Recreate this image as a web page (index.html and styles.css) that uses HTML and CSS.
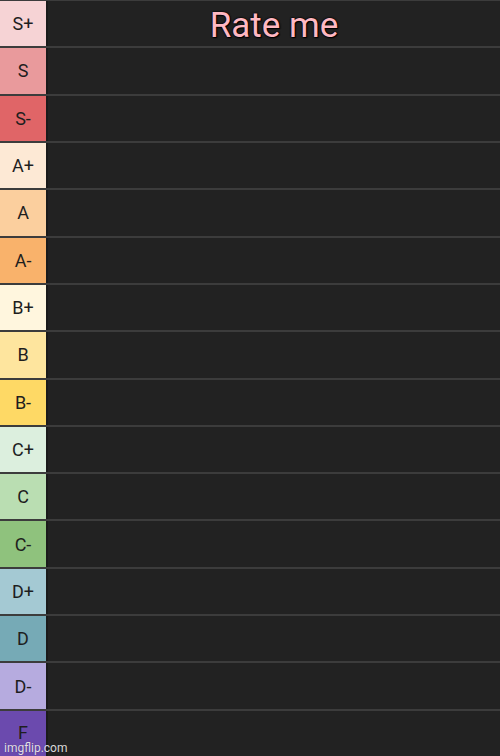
FILE: index.html
```html
<!DOCTYPE html>
<html>
<head>
<meta charset="utf-8">
<link rel="stylesheet" href="styles.css">
</head>
<body>
<div class="tier-list">
  <div class="row"><div class="label t-splus">S+</div><div class="content"><span class="title">Rate me</span></div></div>
  <div class="row"><div class="label t-s">S</div><div class="content"></div></div>
  <div class="row"><div class="label t-sminus">S-</div><div class="content"></div></div>
  <div class="row"><div class="label t-aplus">A+</div><div class="content"></div></div>
  <div class="row"><div class="label t-a">A</div><div class="content"></div></div>
  <div class="row"><div class="label t-aminus">A-</div><div class="content"></div></div>
  <div class="row"><div class="label t-bplus">B+</div><div class="content"></div></div>
  <div class="row"><div class="label t-b">B</div><div class="content"></div></div>
  <div class="row"><div class="label t-bminus">B-</div><div class="content"></div></div>
  <div class="row"><div class="label t-cplus">C+</div><div class="content"></div></div>
  <div class="row"><div class="label t-c">C</div><div class="content"></div></div>
  <div class="row"><div class="label t-cminus">C-</div><div class="content"></div></div>
  <div class="row"><div class="label t-dplus">D+</div><div class="content"></div></div>
  <div class="row"><div class="label t-d">D</div><div class="content"></div></div>
  <div class="row"><div class="label t-dminus">D-</div><div class="content"></div></div>
  <div class="row"><div class="label t-f">F</div><div class="content"></div></div>
  <div class="watermark">imgflip.com</div>
</div>
</body>
</html>
```

FILE: styles.css
```css
html, body {
  margin: 0;
  padding: 0;
  background: #3a3a3a;
}
.tier-list {
  position: relative;
  width: 500px;
  height: 756px;
  box-sizing: border-box;
  padding-top: 1px;
  display: grid;
  grid-template-rows: repeat(16, 1fr);
  row-gap: 2px;
  background: #3c3c3c;
  font-family: "Liberation Sans", Arial, sans-serif;
}
.row {
  display: grid;
  grid-template-columns: 46px 1fr;
  column-gap: 2px;
  background: #1a1a1a;
  min-height: 0;
}
.label {
  display: flex;
  align-items: center;
  justify-content: center;
  font-family: Roboto, "Liberation Sans", sans-serif;
  font-size: 18px;
  color: #1e1e1e;
}
.content {
  background: #222222;
  display: flex;
  justify-content: center;
  align-items: flex-start;
}
.title {
  font-family: Roboto, "Liberation Sans", sans-serif;
  font-size: 35px;
  line-height: 1;
  color: #ffb8c2;
  margin-top: 7px;
  text-shadow: 0 0 2px #000, 0 0 2px #000, 1px 1px 1px #000;
}
.t-splus { background: #f6d3d5; }
.t-s { background: #e99a9c; }
.t-sminus { background: #e06567; }
.t-aplus { background: #fde9d5; }
.t-a { background: #fbcf9e; }
.t-aminus { background: #f9b26b; }
.t-bplus { background: #fff6de; }
.t-b { background: #fee59e; }
.t-bminus { background: #fed965; }
.t-cplus { background: #dcefde; }
.t-c { background: #badeb2; }
.t-cminus { background: #8fc27d; }
.t-dplus { background: #a4c9d3; }
.t-d { background: #76aab6; }
.t-dminus { background: #b6abdf; }
.t-f { background: #6b4aae; align-items: flex-start; padding-top: 11px; }
.watermark {
  position: absolute;
  left: 4px;
  bottom: 1px;
  font-family: Roboto, "Liberation Sans", sans-serif;
  font-size: 12px;
  line-height: 14px;
  color: rgba(255, 255, 255, 0.85);
  text-shadow: 0 0 1px rgba(0,0,0,0.4);
}
```
